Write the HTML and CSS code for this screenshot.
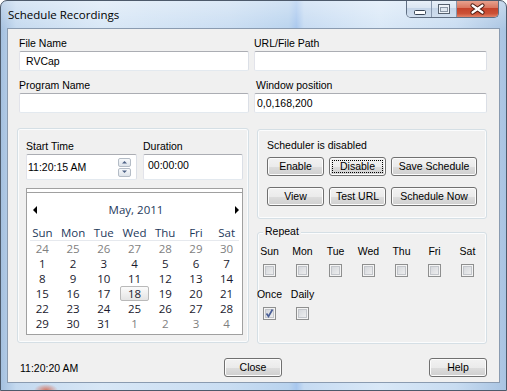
FILE: index.html
```html
<!DOCTYPE html>
<html lang="en">
<head>
    <meta charset="UTF-8">
    <title>Schedule Recordings</title>
    <link rel="stylesheet" href="styles.css">
</head>
<body>
    <div class="window">
        <div class="titlebar">
            <span class="title">Schedule Recordings</span>
            <div class="caption-buttons">
                <div class="cap cap-min">
                    <svg width="26" height="18"><rect x="7.5" y="10.5" width="11" height="4" rx="1" fill="#fff" stroke="#3a4656"/></svg>
                </div>
                <div class="cap cap-max">
                    <svg width="25" height="18"><rect x="6.5" y="4.5" width="11" height="9" fill="#eef3f9" stroke="#56616f"/><rect x="8.5" y="7.5" width="7" height="4" fill="#dfe7f0" stroke="#8a96a5"/></svg>
                </div>
                <div class="cap cap-close">
                    <svg width="41" height="18"><path d="M15.5 5.5 L25.5 12.5 M25.5 5.5 L15.5 12.5" stroke="#4a1a10" stroke-width="4.2" stroke-linecap="round"/><path d="M15.5 5.5 L25.5 12.5 M25.5 5.5 L15.5 12.5" stroke="#fff" stroke-width="2.2" stroke-linecap="round"/></svg>
                </div>
            </div>
        </div>

        <div class="client">
            <div class="fields">
                <div class="field">
                    <label>File Name</label>
                    <div class="textbox">RVCap</div>
                </div>
                <div class="field">
                    <label>URL/File Path</label>
                    <div class="textbox"></div>
                </div>
                <div class="field">
                    <label>Program Name</label>
                    <div class="textbox"></div>
                </div>
                <div class="field">
                    <label class="shift">Window position</label>
                    <div class="textbox narrow-pad">0,0,168,200</div>
                </div>
            </div>

            <div class="middle">
                <div class="group left-group">
                    <div class="time-row">
                        <div class="field start">
                            <label>Start Time</label>
                            <div class="textbox tall picker">
                                <span>11:20:15 AM</span>
                                <div class="spin">
                                    <div class="spin-btn"><svg width="11" height="8"><path d="M3 5.5 L5.5 3 L8 5.5 Z" fill="#4d6185"/></svg></div>
                                    <div class="spin-btn"><svg width="11" height="8"><path d="M3 2.5 L5.5 5 L8 2.5 Z" fill="#4d6185"/></svg></div>
                                </div>
                            </div>
                        </div>
                        <div class="field duration">
                            <label>Duration</label>
                            <div class="textbox tall top-text">00:00:00</div>
                        </div>
                    </div>

                    <div class="calendar">
                        <div class="cal-inner">
                            <div class="cal-head">
                                <svg width="4" height="8"><path d="M4 0 L0 4 L4 8 Z" fill="#000"/></svg>
                                <span>May, 2011</span>
                                <svg width="4" height="8"><path d="M0 0 L4 4 L0 8 Z" fill="#000"/></svg>
                            </div>
                            <div class="cal-names">
                                <span>Sun</span><span>Mon</span><span>Tue</span><span>Wed</span><span>Thu</span><span>Fri</span><span>Sat</span>
                            </div>
                            <div class="cal-sep"></div>
                            <div class="cal-grid">
                                <span class="other">24</span><span class="other">25</span><span class="other">26</span><span class="other">27</span><span class="other">28</span><span class="other">29</span><span class="other">30</span>
                                <span>1</span><span>2</span><span>3</span><span>4</span><span>5</span><span>6</span><span>7</span>
                                <span>8</span><span>9</span><span>10</span><span>11</span><span>12</span><span>13</span><span>14</span>
                                <span>15</span><span>16</span><span>17</span><span class="today">18</span><span>19</span><span>20</span><span>21</span>
                                <span>22</span><span>23</span><span>24</span><span>25</span><span>26</span><span>27</span><span>28</span>
                                <span>29</span><span>30</span><span>31</span><span class="other">1</span><span class="other">2</span><span class="other">3</span><span class="other">4</span>
                            </div>
                        </div>
                    </div>
                </div>

                <div class="right-col">
                    <div class="group sched-group">
                        <div class="status">Scheduler is disabled</div>
                        <div class="btn-row">
                            <button class="btn w57">Enable</button>
                            <button class="btn w57 focused">Disable</button>
                            <button class="btn w86">Save Schedule</button>
                        </div>
                        <div class="btn-row second">
                            <button class="btn w57">View</button>
                            <button class="btn w57">Test URL</button>
                            <button class="btn w86">Schedule Now</button>
                        </div>
                    </div>

                    <div class="group repeat-group">
                        <span class="legend">Repeat</span>
                        <div class="repeat-grid">
                            <div class="day"><span>Sun</span><i class="cb"></i></div>
                            <div class="day"><span>Mon</span><i class="cb"></i></div>
                            <div class="day"><span>Tue</span><i class="cb"></i></div>
                            <div class="day"><span>Wed</span><i class="cb"></i></div>
                            <div class="day"><span>Thu</span><i class="cb"></i></div>
                            <div class="day"><span>Fri</span><i class="cb"></i></div>
                            <div class="day"><span>Sat</span><i class="cb"></i></div>
                        </div>
                        <div class="repeat-grid second">
                            <div class="day"><span>Once</span><i class="cb checked"><svg width="11" height="11"><path d="M2.5 5.5 L4.5 8.5 L8.5 1.5" fill="none" stroke="#4a5f97" stroke-width="1.7"/></svg></i></div>
                            <div class="day"><span>Daily</span><i class="cb"></i></div>
                        </div>
                    </div>
                </div>
            </div>

            <div class="footer">
                <span class="clock">11:20:20 AM</span>
                <button class="btn">Close</button>
                <span></span>
                <button class="btn">Help</button>
            </div>
        </div>
    </div>
</body>
</html>
```

FILE: styles.css
```css
* {
    box-sizing: border-box;
}

body {
    margin: 0;
    font-family: "Liberation Sans", Arial, sans-serif;
    font-size: 10.5px;
    color: #000;
}

.window {
    width: 507px;
    height: 391px;
    display: flex;
    flex-direction: column;
    border: 1px solid #4d5a6b;
    border-radius: 7px 7px 0 0;
    background:
        radial-gradient(ellipse 12px 6px at 45px 389px, rgba(214, 96, 70, 0.8), rgba(214, 96, 70, 0)),
        linear-gradient(to bottom, rgba(255, 255, 255, 0.35), rgba(255, 255, 255, 0) 30px),
        linear-gradient(90deg, #a4c0df 0%, #c4d9ef 3%, #d8e7f6 20%, #c9ddf2 45%, #b9d3ee 57%, #a8c7ee 58.5%, #c6dbf2 60%, #d9e8f7 75%, #c8dcf1 90%, #a9c4e2 100%);
    overflow: hidden;
}

.titlebar {
    height: 27px;
    display: flex;
    align-items: flex-start;
    flex-shrink: 0;
}

.title {
    padding-left: 7px;
    line-height: 27px;
    font-family: "Open Sans", sans-serif;
    font-size: 11.5px;
    color: #000;
}

.caption-buttons {
    margin-left: auto;
    margin-right: 7px;
    margin-top: -1px;
    display: flex;
    height: 18px;
    border: 1px solid #5f6e82;
    border-top: none;
    border-radius: 0 0 5px 5px;
    overflow: hidden;
}

.cap {
    height: 17px;
    display: flex;
}

.cap-min,
.cap-max {
    width: 25px;
    border-right: 1px solid #8797ad;
    background: linear-gradient(#eaf1f9 0%, #dbe6f2 45%, #c5d5e8 50%, #d0deee 100%);
}

.cap-max {
    width: 25px;
}

.cap-close {
    width: 41px;
    background: linear-gradient(#e9a895 0%, #da7760 45%, #c5432b 50%, #cc5237 80%, #e4846a 100%);
}

.client {
    flex: 1;
    margin: 0 6px 7px 6px;
    border: 1px solid #8a9bb0;
    background: #f0f0f0;
    display: flex;
    flex-direction: column;
}

/* top text fields */
.fields {
    display: grid;
    grid-template-columns: 230px 233px;
    column-gap: 5px;
    row-gap: 7px;
    padding: 7px 0 0 11px;
}

.field label {
    display: block;
    height: 14px;
    line-height: 14px;
    margin-bottom: 1px;
}

.field label.shift {
    padding-left: 2px;
}

.textbox {
    height: 20px;
    border: 1px solid;
    border-color: #abadb3 #dbdfe6 #e3e9ef #e2e3ea;
    border-radius: 2px;
    background: #fff;
    line-height: 18px;
    padding: 0 6px;
}

.textbox.narrow-pad {
    padding: 0 2px;
}

.textbox.tall {
    height: 26px;
}

/* group boxes */
.middle {
    display: flex;
    align-items: flex-start;
    gap: 8px;
    padding-left: 9px;
    margin-top: 15px;
}

.group {
    border: 1px solid #d5dfe5;
    border-radius: 3px;
    box-shadow: inset 0 0 0 1px #fbfcfd;
}

.left-group {
    width: 232px;
    height: 215px;
    padding: 10px 0 0 8px;
}

.time-row {
    display: flex;
    gap: 6px;
}

.start {
    width: 111px;
}

.duration {
    width: 100px;
}

.picker {
    display: flex;
    align-items: center;
    justify-content: space-between;
    padding: 0 5px 0 1px;
    line-height: 24px;
}

.top-text {
    padding: 1px 0 0 4px;
    line-height: 18px;
}

.spin {
    display: flex;
    flex-direction: column;
    gap: 1px;
}

.spin-btn {
    width: 13px;
    height: 9px;
    border: 1px solid #b4bcc6;
    border-radius: 2px;
    background: linear-gradient(#f7f9fb, #dde3ea);
    display: flex;
    align-items: center;
    justify-content: center;
}

/* month calendar */
.calendar {
    margin-top: 8px;
    width: 217px;
    height: 147px;
    border: 1px solid #a0a0a0;
    background: #fff;
    padding-top: 3px;
    font-family: "Open Sans", sans-serif;
    font-size: 11.5px;
}

.cal-inner {
    border-top: 1px solid #a0a0a0;
}

.cal-head {
    display: flex;
    align-items: center;
    justify-content: space-between;
    height: 24px;
    margin-top: 5px;
    padding: 0 3px 0 6px;
    color: #1e395b;
}

.cal-head span {
    line-height: 24px;
}

.cal-names,
.cal-grid {
    display: grid;
    grid-template-columns: repeat(7, 1fr);
    text-align: center;
}

.cal-names {
    margin-top: 3px;
    height: 15px;
    line-height: 15px;
    color: #1e395b;
}

.cal-sep {
    height: 1px;
    margin: 0 3px;
    background: #e6e9ee;
}

.cal-grid {
    grid-auto-rows: 15px;
    line-height: 15px;
    color: #1a1a2e;
}

.cal-grid .other {
    color: #7f7f7f;
}

.cal-grid .today {
    margin: 0 1px;
    border: 1px solid #b9b9b9;
    border-radius: 2px;
    background: linear-gradient(#fbfbfb, #e4e4e4);
    line-height: 13px;
}

/* scheduler box */
.right-col {
    width: 230px;
    margin-top: 1px;
    display: flex;
    flex-direction: column;
}

.sched-group {
    height: 90px;
    padding: 9px 0 0 9px;
}

.status {
    height: 13px;
    line-height: 13px;
}

.btn-row {
    display: flex;
    gap: 5px;
    margin-top: 5px;
}

.btn-row.second {
    margin-top: 11px;
}

.btn {
    height: 19px;
    padding: 0;
    border: 1px solid #707070;
    border-radius: 3px;
    background: linear-gradient(#f2f2f2 0%, #ebebeb 50%, #dddddd 51%, #cfcfcf 100%);
    box-shadow: inset 0 0 0 1px #fcfcfc;
    font-family: inherit;
    font-size: 10.5px;
    line-height: 17px;
    color: #000;
    text-align: center;
}

.w57 {
    width: 57px;
}

.w86 {
    width: 86px;
}

.btn.focused {
    outline: 1px dotted #000;
    outline-offset: -4px;
}

/* repeat box */
.repeat-group {
    position: relative;
    margin-top: 13px;
    height: 112px;
    padding-top: 12px;
}

.legend {
    position: absolute;
    top: -9px;
    left: 5px;
    padding: 0 2px;
    background: #f0f0f0;
    line-height: 14px;
}

.repeat-grid {
    display: grid;
    grid-template-columns: repeat(7, 33px);
}

.repeat-grid.second {
    margin-top: 11px;
}

.day {
    width: 23px;
    display: flex;
    flex-direction: column;
    align-items: center;
}

.day span {
    line-height: 13px;
    white-space: nowrap;
}

.cb {
    display: flex;
    align-items: center;
    justify-content: center;
    width: 13px;
    height: 13px;
    margin-top: 6px;
    border: 1px solid #8e8f8f;
    background: linear-gradient(135deg, #cfd2d7, #f3f3f3);
    box-shadow: inset 0 0 0 1px #f4f4f4, inset 0 0 0 2px #c3c6cb;
}

/* footer */
.footer {
    display: grid;
    grid-template-columns: 204px 58px 1fr 58px;
    align-items: center;
    margin-top: 14px;
    padding: 0 12px;
}

.clock {
    line-height: 14px;
}
```
